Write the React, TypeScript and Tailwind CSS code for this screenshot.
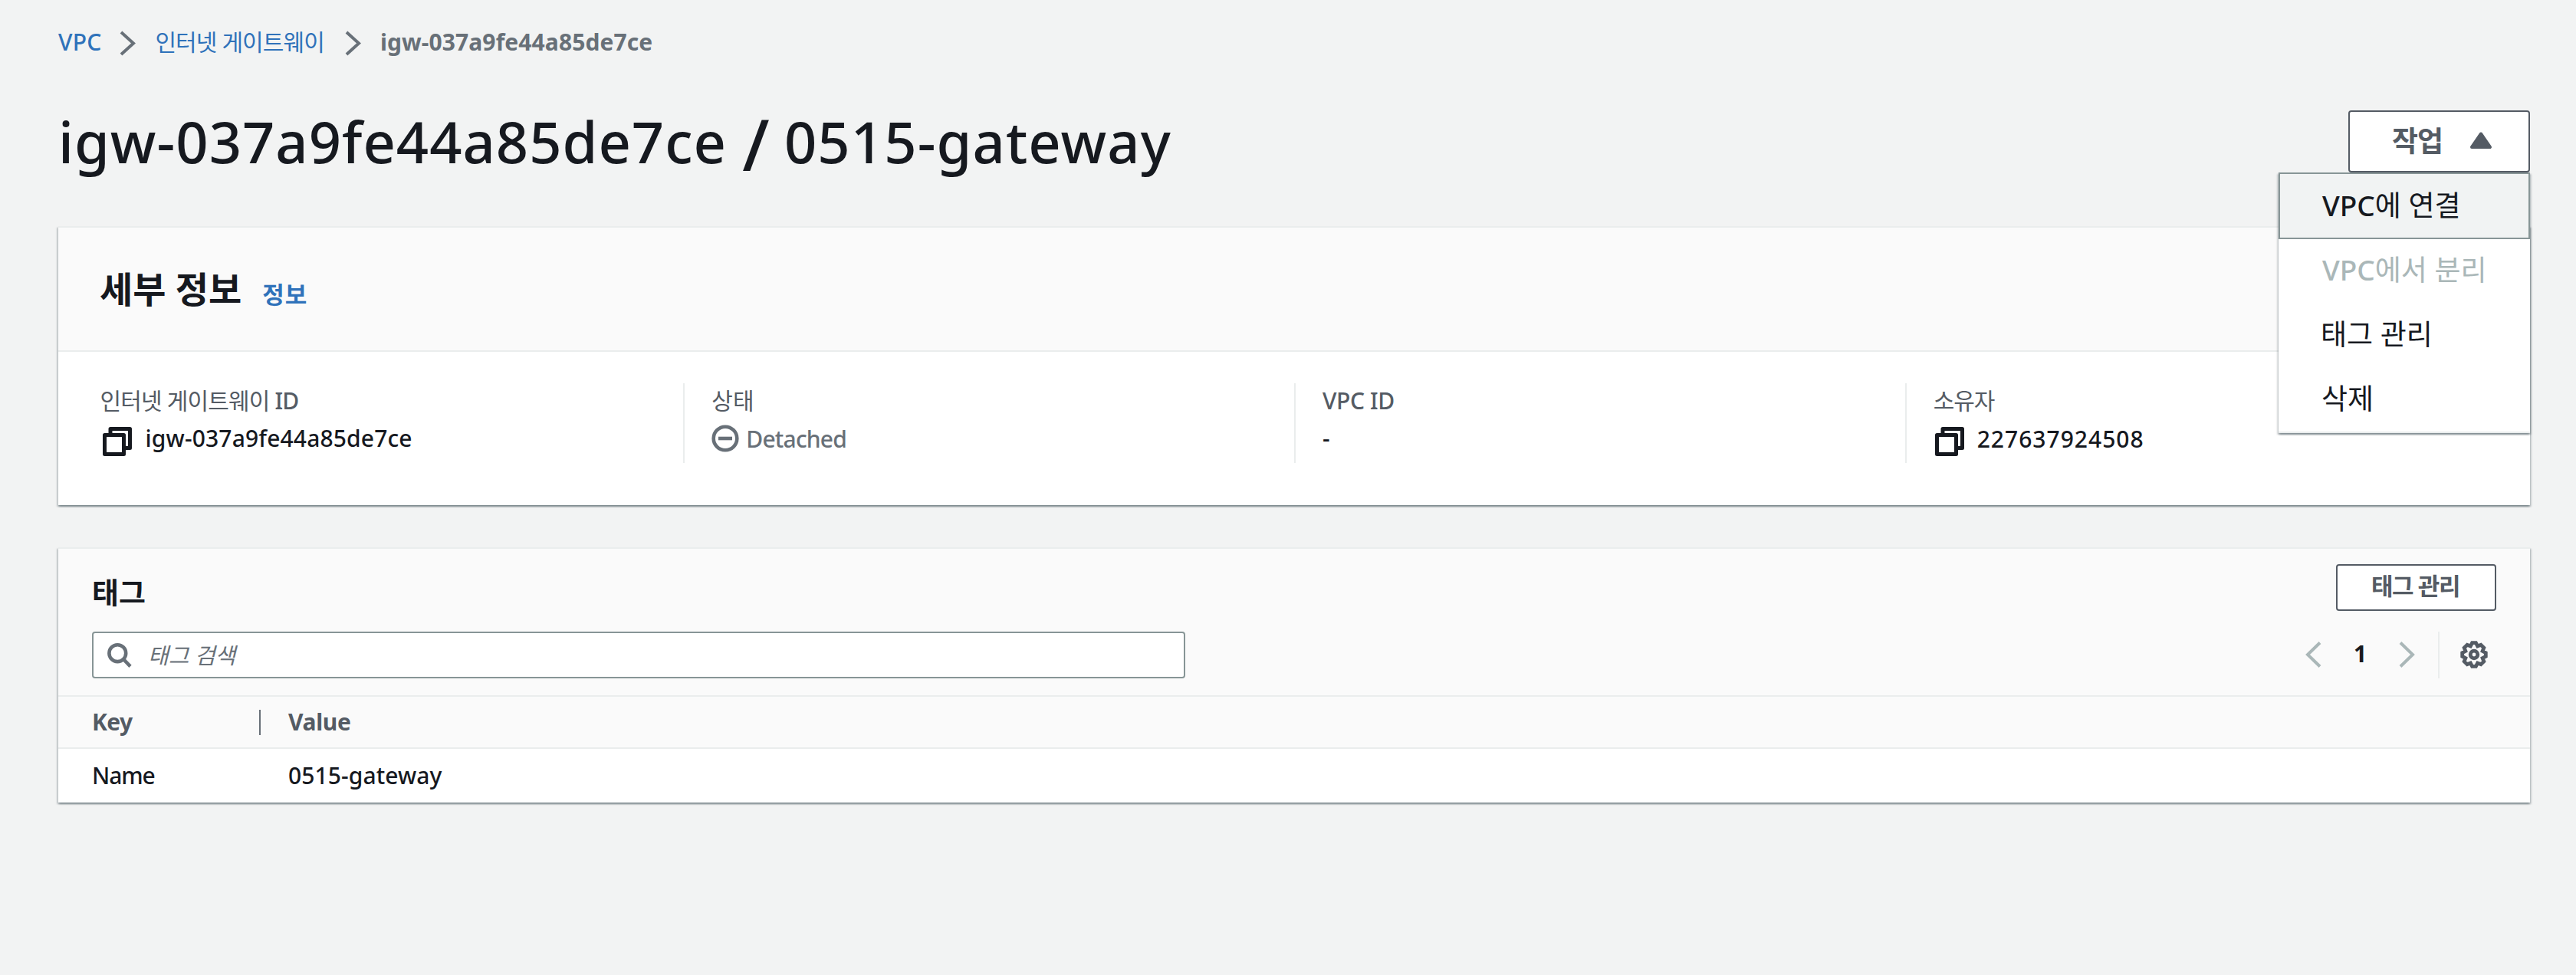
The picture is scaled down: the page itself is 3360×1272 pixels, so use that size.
import type { ReactNode } from "react";

const Chevron = ({ className, points = "2,2 18,16.5 2,31" }: { className: string; points?: string }) => (
  <svg width={21} height={34} viewBox="0 0 21 34" fill="none" stroke="currentColor" strokeWidth={4} className={className}>
    <polyline points={points} />
  </svg>
);

const CopyIcon = ({ className }: { className: string }) => (
  <svg width={40} height={40} viewBox="0 0 40 40" fill="none" stroke="currentColor" strokeWidth={5} strokeLinejoin="round" className={className}>
    <path d="M11 11.5V3.5H36.5V28.5H29" />
    <rect x={3.5} y={11.5} width={25} height={25} />
  </svg>
);

const MinusCircle = () => (
  <svg width={36} height={36} viewBox="0 0 36 36" fill="none" stroke="currentColor" strokeWidth={4.6} className="shrink-0">
    <circle cx={18} cy={18} r={15.3} />
    <path d="M9 18H27" />
  </svg>
);

const SearchIcon = () => (
  <svg width={34} height={34} viewBox="0 0 34 34" fill="none" stroke="currentColor" strokeWidth={4.6} className="shrink-0">
    <circle cx={14.3} cy={14.2} r={10.9} />
    <path d="M21.5 21.5L31 31.3" />
  </svg>
);

const GearIcon = () => (
  <svg width={36} height={36} viewBox="0 0 36 36" fill="none" stroke="currentColor" strokeWidth={4.8} className="text-[#545b64]">
    <path d="M15.6 2.7H20.4L22.6 6.9L26.9 5.2L30.8 9.1L29.1 13.4L33.3 15.6V20.4L29.1 22.6L30.8 26.9L26.9 30.8L22.6 29.1L20.4 33.3H15.6L13.4 29.1L9.1 30.8L5.2 26.9L6.9 22.6L2.7 20.4V15.6L6.9 13.4L5.2 9.1L9.1 5.2L13.4 6.9Z" />
    <circle cx={18} cy={18} r={4.8} />
  </svg>
);

const Cell = ({ label, first, children }: { label: ReactNode; first?: boolean; children: ReactNode }) => (
  <div className={`h-[104px] border-l-2 pl-[35px] pt-[3px] ${first ? "border-transparent" : "border-[#eaeded]"}`}>
    <div className="h-10 whitespace-nowrap text-[#545b64]">{label}</div>
    <div className="mt-[9px] flex h-10 items-center whitespace-nowrap">{children}</div>
  </div>
);

const cardShadow =
  "shadow-[0_2px_2px_0_rgba(0,28,36,0.3),2px_2px_2px_0_rgba(0,28,36,0.15),-2px_2px_2px_0_rgba(0,28,36,0.15)]";

export default function App() {
  return (
    <div className="h-[1272px] w-[3360px] bg-[#f2f3f3] pl-[76px] pr-[60px] pt-[35px] font-['Noto_Sans','Noto_Sans_CJK_KR',sans-serif] text-[30px] leading-10 text-[#16191f]">
      <nav className="flex h-10 items-center whitespace-nowrap">
        <a className="font-medium tracking-[0.2px] text-[#2f72ba]">VPC</a>
        <Chevron className="ml-[24px] mt-[3px] text-[#687078]" />
        <a className="ml-[25px] tracking-[-0.9px] text-[#2f72ba]">인터넷 게이트웨이</a>
        <Chevron className="ml-[27px] mt-[3px] text-[#687078]" />
        <span className="ml-[25px] font-bold tracking-[0.1px] text-[#687078]">igw-037a9fe44a85de7ce</span>
      </nav>

      <header className="mt-[69px] flex h-[81px] items-center justify-between">
        <h1 className="whitespace-nowrap text-[74px] font-medium leading-[80px] tracking-[1px]">
          igw-037a9fe44a85de7ce{" "}
          <span className="relative top-[10px] text-[92px] leading-[0]">/</span>{" "}
          <span className="-ml-[2px] tracking-[1.1px]">0515-gateway</span>
        </h1>
        <div className="relative">
          <button className="flex h-[81px] w-[237px] items-center rounded-[4px] border-2 border-[#545b64] bg-white pl-[55px] text-[37px] font-bold tracking-[-1px] text-[#545b64]">
            <span className="-mt-[2px]">작업</span>
            <svg width={30} height={24} viewBox="0 0 30 24" className="-mt-[3px] ml-[35px]" fill="currentColor" stroke="currentColor" strokeWidth={4} strokeLinejoin="round">
              <path d="M15 3.5L27 21H3Z" />
            </svg>
          </button>
          <ul className={`absolute right-0 top-[81px] z-10 h-[340px] w-[328px] whitespace-nowrap border-b-2 border-[#eaeded] bg-white text-[37px] ${cardShadow}`}>
            <li className="flex h-[87px] items-center border-2 border-[#879596] bg-[#f1f3f3] pb-[2px] pl-[55px]">
              <span className="font-medium">VPC</span>에 연결
            </li>
            <li className="-mt-[2px] flex h-[84px] items-center pl-[57px] text-[#aab7b8]">
              <span className="font-medium">VPC</span>에서 분리
            </li>
            <li className="flex h-[84px] items-center pl-[55px]">태그 관리</li>
            <li className="flex h-[84px] items-center pl-[56px]">삭제</li>
          </ul>
        </div>
      </header>

      <section className={`mt-[70px] h-[364px] border-t-2 border-[#eaeded] bg-white ${cardShadow}`}>
        <div className="flex h-[162px] items-center border-b-2 border-[#eaeded] bg-[#fafafa] pl-[54px]">
          <h2 className="text-[47px] font-bold leading-[60px]">세부 정보</h2>
          <a className="ml-[27px] mt-[14px] text-[31px] font-bold tracking-[1px] text-[#2f72ba]">정보</a>
        </div>
        <div className="mx-[18.6px] grid grid-cols-4 pt-[41px]">
          <Cell first label={<span className="-ml-px tracking-[-0.85px]">인터넷 게이트웨이 <span className="font-medium">ID</span></span>}>
            <CopyIcon className="ml-[1px] mt-[7px] text-[#16191f]" />
            <span className="ml-[17px] font-medium tracking-[0.15px]">igw-037a9fe44a85de7ce</span>
          </Cell>
          <Cell label="상태">
            <span className="flex items-center text-[#687078]">
              <MinusCircle />
              <span className="ml-[9px] mt-[2px] font-medium tracking-[-0.8px]">Detached</span>
            </span>
          </Cell>
          <Cell label={<span className="font-medium tracking-[-0.4px]">VPC ID</span>}>
            <span className="font-medium">-</span>
          </Cell>
          <Cell label={<span className="tracking-[-1.1px]">소유자</span>}>
            <CopyIcon className="ml-[1px] mt-[7px] text-[#16191f]" />
            <span className="ml-[16px] mt-[2px] font-medium tracking-[1px]">227637924508</span>
          </Cell>
        </div>
      </section>

      <section className={`mt-[55px] border-t-2 border-[#eaeded] bg-white ${cardShadow}`}>
        <div className="border-b-2 border-[#eaeded] bg-[#fafafa] px-[44px] pb-[22px] pt-[20px]">
          <div className="flex h-[61px] items-center justify-between">
            <h3 className="mt-[11px] text-[38px] font-bold">태그</h3>
            <button className="flex h-[61px] w-[209px] items-center justify-center rounded-[4px] border-2 border-[#545b64] bg-white pb-[5px] pr-[2px] text-[31px] font-bold tracking-[-1.4px] text-[#545b64]">태그 관리</button>
          </div>
          <div className="mt-[27px] flex h-[61px] items-center justify-between">
            <div className="flex h-[61px] w-[1426px] items-center rounded-[4px] border-2 border-[#879596] bg-white pl-[17px] text-[#687078]">
              <SearchIcon />
              <span className="ml-[20px] text-[29px] italic">태그 검색</span>
            </div>
            <div className="flex h-[61px] items-center">
              <Chevron className="-mt-[2px] text-[#aab7b8]" points="19,1.5 3,17 19,32.5" />
              <span className="-mt-[3px] w-[101px] text-center font-bold">1</span>
              <Chevron className="-mt-[2px] text-[#aab7b8]" points="2,1.5 18,17 2,32.5" />
              <span className="ml-[30px] h-[61px] w-[2px] bg-[#eaeded]" />
              <span className="-mt-[2px] ml-[27px] mr-[11px]"><GearIcon /></span>
            </div>
          </div>
        </div>
        <div className="flex h-[68px] items-center border-b-2 border-[#eaeded] bg-[#fafafa] pl-[44px] font-bold text-[#545b64]">
          <span className="w-[218px] tracking-[-0.6px]">Key</span>
          <span className="h-[33px] w-[2px] bg-[#687078]" />
          <span className="ml-[36px] tracking-[-0.33px]">Value</span>
        </div>
        <div className="flex h-[70px] items-center pl-[44px] font-medium">
          <span className="w-[256px] tracking-[-1.1px]">Name</span>
          <span className="tracking-[0.1px]">0515-gateway</span>
        </div>
      </section>
    </div>
  );
}
